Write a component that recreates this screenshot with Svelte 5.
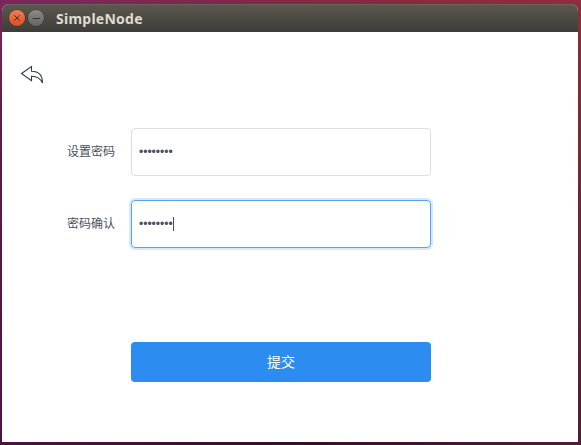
<script>
  let password = $state('••••••••');
  let confirmation = $state('••••••••');
</script>

<div class="desktop">
  <div class="window">
    <header>
      <button class="control close" aria-label="Close">
        <svg width="16" height="16" viewBox="0 0 16 16"><path d="M5.2 5.2l5.6 5.6M10.8 5.2l-5.6 5.6" /></svg>
      </button>
      <button class="control minimize" aria-label="Minimize">
        <svg width="16" height="16" viewBox="0 0 16 16"><path d="M4.5 8.5h7.5" /></svg>
      </button>
      <span class="title">SimpleNode</span>
    </header>
    <main>
      <button class="back" aria-label="Back">
        <svg width="26" height="22" viewBox="0 0 26 22">
          <path d="M2.5 8.5L12.5 1.5V6.2C19 6.2 23.5 10 23.5 18C21.2 13.2 18 11.2 12.5 11.3V15.6Z" />
        </svg>
      </button>
      <form>
        <div class="row">
          <span class="label">设置密码</span>
          <div class="field">{password}</div>
        </div>
        <div class="row">
          <span class="label">密码确认</span>
          <div class="field focused">{confirmation}<i class="caret"></i></div>
        </div>
        <button class="submit" type="button">提交</button>
      </form>
    </main>
  </div>
</div>

<style>
  :global(body) {
    margin: 0;
    overflow: hidden;
  }
  * {
    box-sizing: border-box;
  }
  button {
    border: 0;
    padding: 0;
    background: none;
  }
  .desktop {
    width: 581px;
    height: 445px;
    padding: 4px 3px 3px 2px;
    background:
      linear-gradient(90deg, #4b1344, #380c2c 50%, #571a36) 0 100% / 100% 3px no-repeat,
      linear-gradient(#922c3c, #812739 25%, #64203a 65%, #541a34) 100% 0 / 3px 100% no-repeat,
      linear-gradient(#7a275d, #5c1b4d 30%, #4b1344) 0 0 / 2px 100% no-repeat,
      linear-gradient(90deg, #7a275d, #842942 55%, #922c3c);
    font-family: "Liberation Sans", "Noto Sans CJK SC", sans-serif;
  }
  .window {
    height: 438px;
    border-radius: 7px 7px 0 0;
    background: #fff;
    overflow: hidden;
  }
  header {
    display: flex;
    align-items: center;
    height: 28px;
    padding-left: 7px;
    background: linear-gradient(#5b594f, #3d3c38);
    box-shadow: inset 0 1px #67655c;
  }
  .control {
    display: flex;
    width: 16px;
    height: 16px;
    margin-right: 3px;
    border-radius: 50%;
    box-shadow: 0 0 0 0.6px #34332e;
  }
  .control path {
    fill: none;
    stroke: #373632;
    stroke-width: 1;
  }
  .close {
    background: linear-gradient(#f37e55, #e24d1c);
  }
  .minimize {
    background: linear-gradient(#8c8a83, #66645e);
  }
  .title {
    margin-left: 9px;
    font: bold 14px/28px "Noto Sans", sans-serif;
    letter-spacing: 0.25px;
    color: #dfdbd2;
    padding-top: 1px;
  }
  main {
    padding: 33px 0 0 16px;
  }
  .back {
    display: block;
    width: 26px;
    height: 22px;
    margin-left: 1px;
  }
  .back path {
    fill: none;
    stroke: #2c3e50;
    stroke-width: 1.1;
    stroke-linejoin: miter;
  }
  form {
    display: flex;
    flex-direction: column;
    gap: 24px;
    margin-top: 41px;
  }
  .row {
    display: flex;
    align-items: center;
    height: 48px;
  }
  .label {
    width: 97px;
    padding-bottom: 2px;
    text-align: right;
    font-size: 12px;
    line-height: 12px;
    color: #495060;
    margin-right: 16px;
    font-family: "Noto Sans CJK SC", sans-serif;
  }
  .field {
    display: flex;
    align-items: center;
    width: 300px;
    height: 48px;
    padding-left: 7px;
    border: 1px solid #dddee1;
    border-radius: 4px;
    font-size: 12px;
    color: #495060;
  }
  .focused {
    border-color: #57a3f3;
    box-shadow: 0 0 0 2px rgba(45, 140, 240, 0.2);
  }
  .caret {
    width: 1px;
    height: 14px;
    background: #495060;
  }
  .submit {
    width: 300px;
    height: 40px;
    margin: 70px 0 0 113px;
    padding-bottom: 2px;
    border-radius: 4px;
    background: #2d8cf0;
    color: #fff;
    font: 14px/38px "Noto Sans CJK SC", sans-serif;
  }
</style>
